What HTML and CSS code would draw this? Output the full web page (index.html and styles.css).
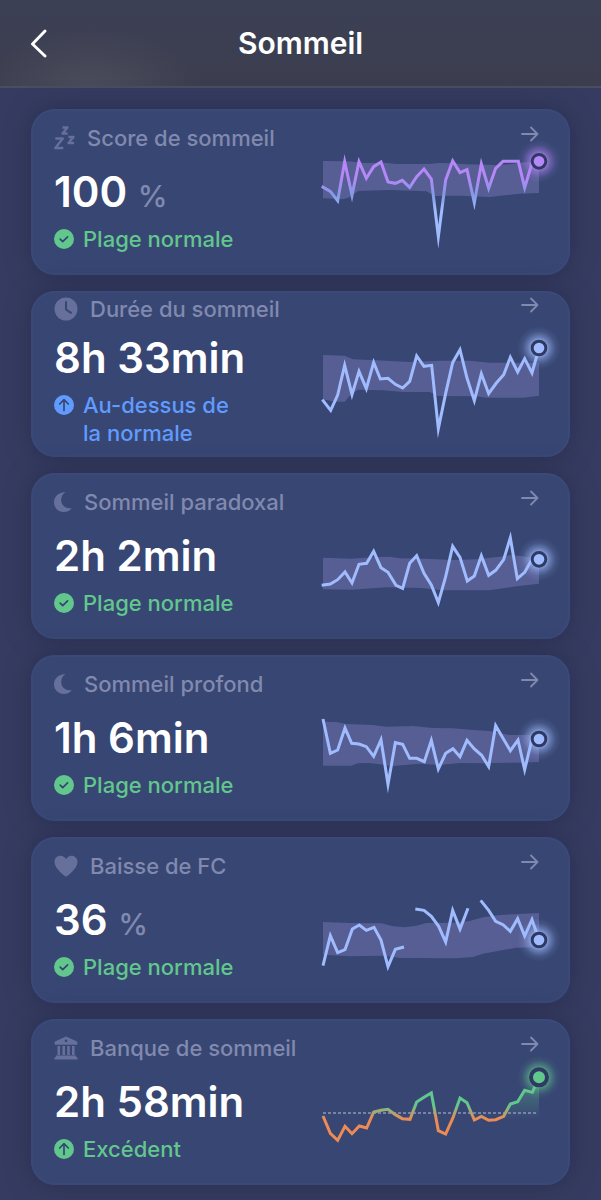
FILE: index.html
```html
<!DOCTYPE html>
<html lang="fr">
<head>
  <meta charset="UTF-8" />
  <meta name="viewport" content="width=device-width, initial-scale=1.0" />
  <title>Sommeil</title>
  <link rel="stylesheet" href="styles.css">
</head>

<body>
  <!-- Shared icons and gradients -->
  <svg class="defs" width="0" height="0" aria-hidden="true">
    <defs>
      <linearGradient id="score-line" gradientUnits="userSpaceOnUse" x1="0" y1="150" x2="0" y2="300">
        <stop offset="0.35" stop-color="#b687f8" />
        <stop offset="0.7" stop-color="#839ae6" />
        <stop offset="1" stop-color="#a0bcff" />
      </linearGradient>
      <linearGradient id="bank-line" gradientUnits="userSpaceOnUse" x1="0" y1="255" x2="0" y2="297">
        <stop offset="0" stop-color="#62c78d" />
        <stop offset="1" stop-color="#ee8a53" />
      </linearGradient>
      <linearGradient id="bank-fill" gradientUnits="userSpaceOnUse" x1="0" y1="180" x2="0" y2="300">
        <stop offset="0" stop-color="#62c78d" stop-opacity="0.4" />
        <stop offset="1" stop-color="#62c78d" stop-opacity="0" />
      </linearGradient>
      <radialGradient id="glow-purple">
        <stop offset="0.3" stop-color="#b084f5" stop-opacity="0.85" />
        <stop offset="0.5" stop-color="#b084f5" stop-opacity="0.45" />
        <stop offset="0.75" stop-color="#b084f5" stop-opacity="0.12" />
        <stop offset="1" stop-color="#b084f5" stop-opacity="0" />
      </radialGradient>
      <radialGradient id="glow-blue">
        <stop offset="0.3" stop-color="#a0bcff" stop-opacity="0.85" />
        <stop offset="0.5" stop-color="#a0bcff" stop-opacity="0.45" />
        <stop offset="0.75" stop-color="#a0bcff" stop-opacity="0.12" />
        <stop offset="1" stop-color="#a0bcff" stop-opacity="0" />
      </radialGradient>
      <radialGradient id="glow-green">
        <stop offset="0.35" stop-color="#62c78d" stop-opacity="0.8" />
        <stop offset="0.55" stop-color="#62c78d" stop-opacity="0.4" />
        <stop offset="0.78" stop-color="#62c78d" stop-opacity="0.1" />
        <stop offset="1" stop-color="#62c78d" stop-opacity="0" />
      </radialGradient>
      <symbol id="arrow" viewBox="0 0 18 18">
        <path d="M1 9h15.500M10 2.500 16.500 9 10 15.500" fill="none" stroke="currentColor" stroke-width="1.800" stroke-linecap="round" stroke-linejoin="round" />
      </symbol>
      <symbol id="check" viewBox="0 0 20 20">
        <circle cx="10" cy="10" r="10" fill="currentColor" />
        <path d="M6.200 10.200l2.500 2.400 4.900-4.800" fill="none" stroke="#374673" stroke-width="1.700" stroke-linecap="round" stroke-linejoin="round" />
      </symbol>
      <symbol id="up" viewBox="0 0 20 20">
        <circle cx="10" cy="10" r="10" fill="currentColor" />
        <path d="M10 15.500V5M5.700 9 10 4.700 14.300 9" fill="none" stroke="#374673" stroke-width="1.700" stroke-linecap="round" stroke-linejoin="round" />
      </symbol>
      <symbol id="moon" viewBox="0 0 18 20">
        <path d="M11.500 0C4.800.2 0 4.500 0 10.300 0 15.900 4.300 20 9.800 20c3.600 0 6.500-1.600 8-4-6.300 1.200-10.600-2.500-10.600-8.200C7.200 4.400 8.800 1.700 11.500 0z" fill="currentColor" />
      </symbol>
    </defs>
  </svg>

  <header class="topbar">
    <a href="#" class="back" aria-label="Retour">
      <svg width="20" height="30" viewBox="0 0 20 30"><path d="M17 3 4.500 16 17 28" fill="none" stroke="currentColor" stroke-width="2.900" stroke-linecap="round" stroke-linejoin="round" /></svg>
    </a>
    <h1>Sommeil</h1>
  </header>

  <main class="cards">
    <a href="#score" class="card">
      <div class="info">
        <h2 class="label">
          <svg width="21" height="24" viewBox="0 0 21 24"><path d="M8.500 1.500h5l-5 6h5.200M1.300 12.500h7.500l-7.500 9.500h8M14.500 11h5l-5 6h5.500" fill="none" stroke="currentColor" stroke-width="2.300" stroke-linejoin="round" /></svg>
          Score de sommeil
        </h2>
        <p class="value">100 <span class="unit">%</span></p>
        <p class="status normal"><svg width="20" height="20"><use href="#check" /></svg>Plage normale</p>
      </div>
      <div class="trend">
        <svg class="arrow" width="18" height="18"><use href="#arrow" /></svg>
        <svg class="chart" viewBox="40 117 648 300">
          <path class="band" d="M40 153L115 154 165 159 225 158 260 162 355 162 390 159 430 160 470 163 560 165 600 163 640 157 688 157V249L630 251 540 261 450 257 375 258 350 244 240 240 145 243 120 262 100 268 40 265z" />
          <polyline class="line score" points="36,229 62,244 84,272 105,155 127,256 148,155 170,205 192,170 214,156 235,216 257,220 278,211 300,232 321,200 343,177 365,207 386,380 408,210 429,153 451,188 472,179 494,278 515,162 537,235 558,175 580,154 602,154 626,154 645,233 667,160 688,154" />
          <circle cx="688" cy="154" r="66" fill="url(#glow-purple)" />
          <circle class="dot purple" cx="688" cy="154" r="20.500" />
        </svg>
      </div>
    </a>

    <a href="#duree" class="card tall">
      <div class="info">
        <h2 class="label">
          <svg width="24" height="24" viewBox="0 0 24 24"><circle cx="12" cy="12" r="11.500" fill="currentColor" /><path d="M12 5v7.500l5 3.300" fill="none" stroke="#374673" stroke-width="2" stroke-linecap="round" stroke-linejoin="round" /></svg>
          Durée du sommeil
        </h2>
        <p class="value">8h 33min</p>
        <p class="status above"><svg width="20" height="20"><use href="#up" /></svg><span>Au-dessus de<br>la normale</span></p>
      </div>
      <div class="trend">
        <svg class="arrow" width="18" height="18"><use href="#arrow" /></svg>
        <svg class="chart" viewBox="40 123 648 300">
          <path class="band" d="M40 195L105 197 130 208 200 211 300 216 390 212 480 212 540 218 688 219V317L640 323 530 323 500 319 385 318 360 306 280 306 220 301 145 299 125 312 105 335 75 335 40 328z" />
          <polyline class="line" points="38,329 63,361 84,315 105,226 127,314 148,244 170,296 192,217 212,267 235,265 257,283 279,294 300,274 321,198 343,229 366,226 386,416 408,310 429,218 451,179 472,264 494,332 515,251 537,311 560,279 582,254 602,202 624,246 645,206 667,249 688,174" />
          <circle cx="688" cy="174" r="66" fill="url(#glow-blue)" />
          <circle class="dot" cx="688" cy="174" r="20.500" />
        </svg>
      </div>
    </a>

    <a href="#paradoxal" class="card">
      <div class="info">
        <h2 class="label"><svg width="18" height="20"><use href="#moon" /></svg>Sommeil paradoxal</h2>
        <p class="value">2h 2min</p>
        <p class="status normal"><svg width="20" height="20"><use href="#check" /></svg>Plage normale</p>
      </div>
      <div class="trend">
        <svg class="arrow" width="18" height="18"><use href="#arrow" /></svg>
        <svg class="chart" viewBox="40 114 648 300">
          <path class="band" d="M40 248L125 251 200 246 240 245 270 250 345 251 430 255 500 253 570 245 605 240 660 247 688 247V326L610 335 540 346 400 346 335 339 230 337 125 344 40 343z" />
          <polyline class="line" points="36,331 62,327 84,314 106,291 127,324 148,268 171,265 192,229 214,278 235,292 259,331 279,340 300,265 321,242 343,295 365,330 386,383 408,305 429,214 451,247 473,318 494,303 515,242 537,301 558,286 582,254 602,188 623,311 645,292 667,253 688,253" />
          <circle cx="688" cy="253" r="66" fill="url(#glow-blue)" />
          <circle class="dot" cx="688" cy="253" r="20.500" />
        </svg>
      </div>
    </a>

    <a href="#profond" class="card">
      <div class="info">
        <h2 class="label"><svg width="18" height="20"><use href="#moon" /></svg>Sommeil profond</h2>
        <p class="value">1h 6min</p>
        <p class="status normal"><svg width="20" height="20"><use href="#check" /></svg>Plage normale</p>
      </div>
      <div class="trend">
        <svg class="arrow" width="18" height="18"><use href="#arrow" /></svg>
        <svg class="chart" viewBox="40 114 648 300">
          <path class="band" d="M40 194L80 195 110 201 190 204 230 209 310 207 370 213 430 214 490 219 540 222 600 234 688 234V315L620 317 520 319 450 318 390 324 330 320 250 327 180 318 145 319 125 326 40 326z" />
          <polyline class="line" points="40,186 62,289 84,279 106,213 126,259 148,261 170,269 192,298 214,248 235,382 257,257 279,262 300,304 321,304 344,314 365,250 386,336 408,289 430,275 451,299 472,250 494,276 516,295 537,329 558,206 580,244 602,281 625,249 645,338 667,246 688,246" />
          <circle cx="688" cy="246" r="66" fill="url(#glow-blue)" />
          <circle class="dot" cx="688" cy="246" r="20.500" />
        </svg>
      </div>
    </a>

    <a href="#fc" class="card">
      <div class="info">
        <h2 class="label">
          <svg width="24" height="22" viewBox="0 0 24 22"><path d="M12 21.500C11 21.500.500 13.800.500 7 .500 3.200 3.200.800 6.400.800c2.500 0 4.500 1.300 5.600 3.400C13.100 2.100 15.100.800 17.600.800c3.200 0 5.900 2.400 5.900 6.200 0 6.800-10.500 14.500-11.500 14.500z" fill="currentColor" /></svg>
          Baisse de FC
        </h2>
        <p class="value">36 <span class="unit">%</span></p>
        <p class="status normal"><svg width="20" height="20"><use href="#check" /></svg>Plage normale</p>
      </div>
      <div class="trend">
        <svg class="arrow" width="18" height="18"><use href="#arrow" /></svg>
        <svg class="chart" viewBox="40 117 648 300">
          <path class="band" d="M40 252L120 255 215 256 250 265 285 268 320 263 350 255 430 254 480 249 520 238 570 231 688 225V328L620 329 520 347 490 357 440 361 270 360 220 353 120 355 40 350z" />
          <polyline class="line" points="40,383 62,293 84,344 106,335 128,273 149,261 170,277 193,268 214,306 235,386 257,334 283,327" />
          <polyline class="line" points="317,213 343,217 365,235 387,265 408,312 429,217 451,273 475,211" />
          <polyline class="line" points="513,187 537,217 558,250 580,260 602,280 624,242 645,294 667,245 688,306" />
          <circle cx="688" cy="306" r="66" fill="url(#glow-blue)" />
          <circle class="dot" cx="688" cy="306" r="20.500" />
        </svg>
      </div>
    </a>

    <a href="#banque" class="card">
      <div class="info">
        <h2 class="label">
          <svg width="24" height="24" viewBox="0 0 24 24"><path fill="currentColor" fill-rule="evenodd" d="M12 .5 22.500 5.300q1 .5 1 1.600v.8q0 1-1 1h-21q-1 0-1-1v-.8q0-1.100 1-1.600zM12 3.500a1.300 1.300 0 1 0 0 2.700 1.300 1.300 0 0 0 0-2.700zM3.500 10h2.600v9H3.500zM8.400 10H11v9H8.400zM13.200 10h2.600v9h-2.600zM18 10h2.600v9H18zM2 19.500h20v1.300l1.500.8v1.900H.500v-1.900l1.500-.8z" /></svg>
          Banque de sommeil
        </h2>
        <p class="value">2h 58min</p>
        <p class="status normal"><svg width="20" height="20"><use href="#up" /></svg>Excédent</p>
      </div>
      <div class="trend">
        <svg class="arrow" width="18" height="18"><use href="#arrow" /></svg>
        <svg class="chart" viewBox="40 117 648 300">
          <path d="M560 292L582 288 602 252 624 245 645 211 668 217 688 172V297H560z" fill="url(#bank-fill)" />
          <line class="baseline" x1="40" y1="279" x2="683" y2="279" />
          <polyline class="line bank" points="40,288 62,340 84,361 106,319 127,341 149,318 171,324 192,276 214,271 235,268 257,284 278,296 301,298 321,246 343,232 365,219 386,332 408,342 430,293 451,234 472,248 494,300 515,289 537,301 558,299 582,289 602,252 624,245 645,211 668,217 688,172" />
          <circle cx="688" cy="172" r="66" fill="url(#glow-green)" />
          <circle class="dot green" cx="688" cy="172" r="24" />
        </svg>
      </div>
    </a>
  </main>
</body>
</html>
```
FILE: styles.css
```css
* {
  box-sizing: border-box;
}

body {
  margin: 0;
  min-height: 100vh;
  font-family: Inter, "Liberation Sans", sans-serif;
  background-color: #363c61;
  color: #fff;
}

h1, h2, p {
  margin: 0;
}

svg {
  flex: none;
}

.defs {
  position: absolute;
}

.topbar {
  display: grid;
  grid-template-columns: 48px 1fr 48px;
  align-items: center;
  height: 88px;
  padding: 0 28px;
  background: radial-gradient(ellipse 110px 60px at 90px 88px, #4b4c5b, #4b4c5b00), linear-gradient(#3c4055, #3c3e4f);
  border-bottom: 2px solid #4b4d60;
}

.topbar h1 {
  font-size: 30px;
  line-height: 36px;
  font-weight: 600;
  text-align: center;
}

.back {
  display: flex;
  color: #fff;
}

.cards {
  display: flex;
  flex-direction: column;
  gap: 16px;
  padding: 21px 31px 12px;
}

.card {
  display: grid;
  grid-template-columns: 1fr 216px;
  min-height: 166px;
  padding: 0 31px 0 23px;
  background: #374673;
  border-radius: 24px;
  box-shadow: inset 0 0 0 2px #3a4977, 0 0 24px #22264499;
  color: #fff;
  text-decoration: none;
}

.info {
  padding: 15px 0 22px;
}

.label {
  display: flex;
  align-items: center;
  gap: 12px;
  margin-bottom: 14px;
  font-size: 22px;
  line-height: 28px;
  font-weight: 500;
  color: #8189ae;
  white-space: nowrap;
}

.label svg {
  color: #66709a;
}

.value {
  margin-bottom: 7px;
  font-size: 42px;
  line-height: 52px;
  font-weight: 600;
  white-space: nowrap;
}

.unit {
  font-size: 30px;
  line-height: 30px;
  font-weight: 500;
  color: #8189ae;
}

.status {
  display: flex;
  gap: 9px;
  font-size: 22px;
  line-height: 28px;
  font-weight: 500;
}

.status svg {
  margin-top: 4px;
}

.normal {
  color: #62c78d;
}

.above {
  color: #609bff;
}

.trend {
  display: flex;
  flex-direction: column;
  justify-content: space-between;
  padding: 16px 0 26px;
}

.arrow {
  align-self: flex-end;
  color: #8189ae;
}

/* two-line status */
.tall .info {
  padding: 4px 0 10px;
}

.tall .label {
  margin-bottom: 9px;
}

.tall .trend {
  padding-top: 5px;
}

.chart {
  width: 216px;
  height: 100px;
  overflow: visible;
}

.band {
  fill: #565e94;
}

.line {
  fill: none;
  stroke: #a0bcff;
  stroke-width: 9;
  stroke-miterlimit: 10;
}

.score {
  stroke: url(#score-line);
}

.bank {
  stroke: url(#bank-line);
}

.baseline {
  stroke: #8d96b5;
  stroke-width: 5;
  stroke-dasharray: 9 6;
}

.dot {
  fill: #a0bcff;
  stroke: #2e3a63;
  stroke-width: 9;
}

.dot.purple {
  fill: #b687f8;
}

.dot.green {
  fill: #62c78d;
  stroke-width: 12;
}
```
